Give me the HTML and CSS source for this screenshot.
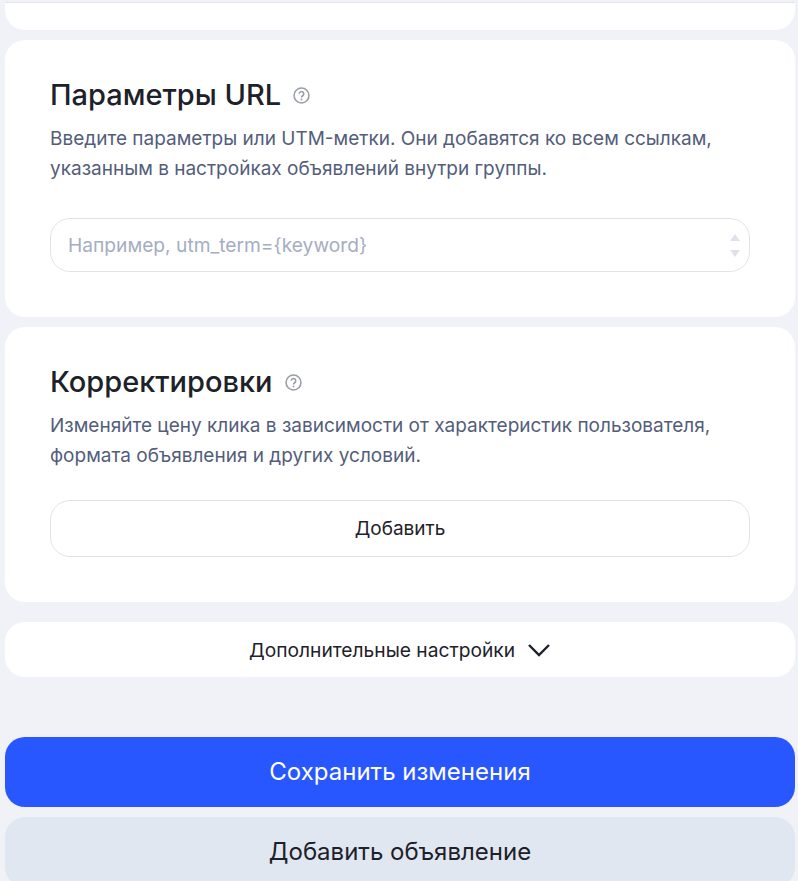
FILE: index.html
```html
<!DOCTYPE html>
<html lang="ru">
<head>
  <meta charset="UTF-8" />
  <title>Настройки группы</title>
  <meta name="viewport" content="width=device-width, initial-scale=1" />
  <link rel="stylesheet" href="styles.css">
</head>
<body>
  <div class="page">
    <div class="card card-top"></div>

    <section class="card card-url">
      <div class="card-head">
        <h3>Параметры URL</h3>
        <svg class="help-icon" viewBox="0 0 16 16" aria-hidden="true">
          <circle cx="8" cy="8" r="7" />
          <path d="M5.9 6.3a2.1 2.1 0 1 1 3.4 1.7c-.8.6-1.3 1-1.3 1.9" />
          <circle class="dot" cx="8" cy="11.8" r=".9" />
        </svg>
      </div>
      <p class="card-text">Введите параметры или UTM-метки. Они добавятся ко всем ссылкам, указанным в настройках объявлений внутри группы.</p>
      <div class="field">
        <span class="placeholder">Например, utm_term={keyword}</span>
        <span class="spinner">
          <i class="arrow-up"></i>
          <i class="arrow-down"></i>
        </span>
      </div>
    </section>

    <section class="card card-adjust">
      <div class="card-head">
        <h3>Корректировки</h3>
        <svg class="help-icon" viewBox="0 0 16 16" aria-hidden="true">
          <circle cx="8" cy="8" r="7" />
          <path d="M5.9 6.3a2.1 2.1 0 1 1 3.4 1.7c-.8.6-1.3 1-1.3 1.9" />
          <circle class="dot" cx="8" cy="11.8" r=".9" />
        </svg>
      </div>
      <p class="card-text">Изменяйте цену клика в зависимости от характеристик пользователя, формата объявления и других условий.</p>
      <button class="add-btn" type="button">Добавить</button>
    </section>

    <button class="more-btn" type="button">
      Дополнительные настройки
      <svg class="chevron" viewBox="0 0 24 14" aria-hidden="true">
        <path d="M2 2l10 10L22 2" />
      </svg>
    </button>

    <button class="save-btn" type="button">Сохранить изменения</button>
    <button class="new-btn" type="button">Добавить объявление</button>
  </div>
</body>
</html>
```

FILE: styles.css
```css
* { box-sizing: border-box; }
html, body { height: 881px; overflow: hidden; }
body { margin: 0; background: #f0f2f8; color: #1d2129; font-family: Inter, "Noto Sans", sans-serif; }
button { display: block; width: 100%; border: none; font-family: inherit; cursor: pointer; }

.page { padding: 2px 3px 0 5px; display: flex; flex-direction: column; }

.card { background: #fff; border-radius: 20px; padding: 0 45px; }
.card-top {
  height: 28px; border-top: 1px solid #e3e5ea;
  border-radius: 0 0 20px 20px; margin-bottom: 10px;
}
.card-url { height: 277px; padding-top: 36px; margin-bottom: 10px; }
.card-adjust { height: 275px; padding-top: 36px; margin-bottom: 20px; }

.card-head { display: flex; align-items: center; gap: 12px; height: 38px; }
.card-head h3 { margin: 0; font-size: 29px; font-weight: 500; line-height: 38px; }
.help-icon { width: 17px; height: 17px; fill: none; stroke: #9a9ea8; stroke-width: 1.5; }
.help-icon .dot { fill: #9a9ea8; stroke: none; }

.card-text { margin: 10px 0 0; font-size: 19px; line-height: 30px; color: #535d7a; }

.field {
  margin-top: 34px; height: 54px; padding: 0 9px 0 17px;
  display: flex; align-items: center; justify-content: space-between;
  border: 1px solid #e2e3e8; border-radius: 20px;
}
.placeholder { font-size: 19.2px; color: #a5adc2; }
.spinner { display: flex; flex-direction: column; gap: 9px; }
.spinner i { display: block; width: 0; height: 0; border-left: 5px solid transparent; border-right: 5px solid transparent; }
.arrow-up { border-bottom: 7px solid #dfe1ec; }
.arrow-down { border-top: 7px solid #dfe1ec; }

.add-btn {
  margin-top: 29px; height: 57px; background: #fff; color: #1d2129;
  border: 1px solid #e2e3e8; border-radius: 20px; font-size: 19px;
}

.more-btn {
  height: 55px; background: #fff; color: #1d2129; border-radius: 20px; font-size: 19.2px;
  display: flex; align-items: center; justify-content: center; gap: 12px;
}
.chevron { width: 24px; height: 14px; fill: none; stroke: #1d2129; stroke-width: 2.4; }

.save-btn {
  margin-top: 60px; height: 70px; padding-bottom: 2px; background: #2856ff; color: #fff;
  border-radius: 20px; font-size: 24px;
}
.new-btn {
  margin-top: 10px; height: 70px; padding-bottom: 2px; background: #e1e7f1; color: #1d2129;
  border-radius: 20px; font-size: 24px;
}
```
